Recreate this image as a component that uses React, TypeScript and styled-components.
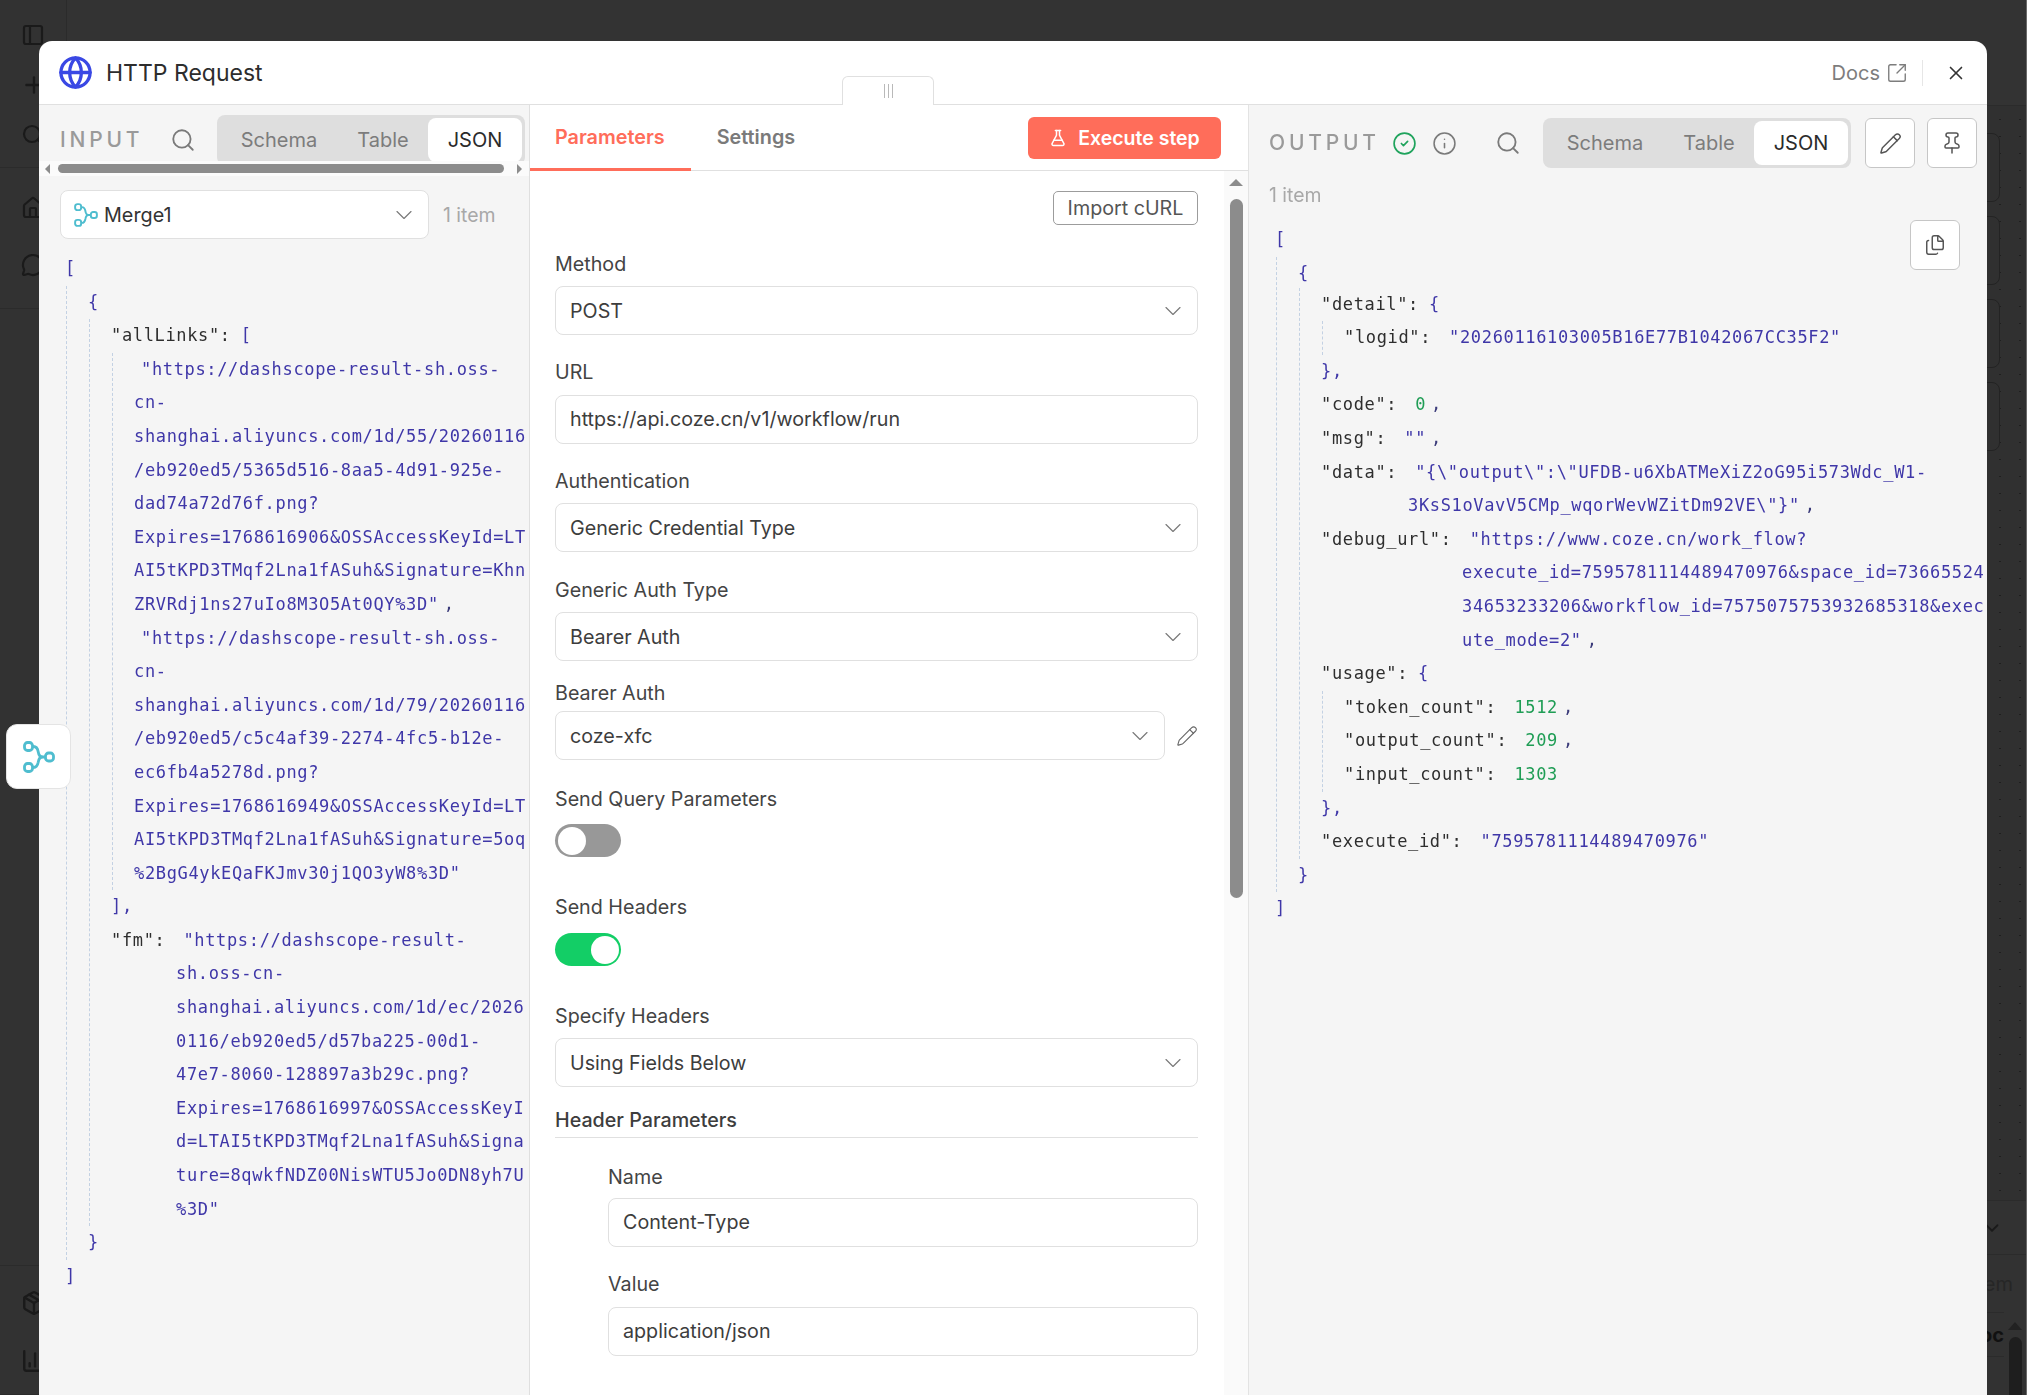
import styled, { createGlobalStyle } from 'styled-components';
import {
  BarChart3,
  ChevronDown,
  CircleCheck,
  Files,
  FlaskConical,
  Globe,
  Home,
  Info,
  MessageCircle,
  Package,
  PanelLeft,
  Pencil,
  Pin,
  Plus,
  Search,
  SquareArrowOutUpRight,
  X,
} from 'lucide-react';

const GlobalStyle = createGlobalStyle`
  html, body {
    margin: 0;
    padding: 0;
    height: 100%;
    overflow: hidden;
    background: #323232;
    font-family: 'Inter', 'Noto Sans', sans-serif;
  }
  * { box-sizing: border-box; }
`;

/* ---- page behind the dialog ---- */

const Backdrop = styled.div`
  display: grid;
  grid-template-columns: 67px 1fr;
  width: 2027px;
  height: 1395px;
  background: #323232;
  color: #1a1a1a;
  overflow: hidden;
  border-right: 1px solid #6a6a6a;
`;

const Sidebar = styled.aside`
  display: flex;
  flex-direction: column;
  border-right: 1px solid #2b2b2b;
`;

const SideGroup = styled.div<{ $h: number; $pt: number; $gap: number }>`
  display: flex;
  flex-direction: column;
  align-items: flex-start;
  gap: ${(p) => p.$gap}px;
  height: ${(p) => p.$h}px;
  padding: ${(p) => p.$pt}px 0 0 21px;
  border-bottom: 1px solid #2b2b2b;
  flex: none;
`;

const BackMain = styled.main`
  display: flex;
  flex-direction: column;
  background: #303030;
`;

const TopBar = styled.div`
  height: 106px;
  flex: none;
  background: #333;
  border-bottom: 1px solid #2b2b2b;
`;

const Canvas = styled.div`
  flex: 1;
  display: flex;
  flex-direction: column;
  align-items: flex-end;
  gap: 14px;
  padding: 27px 26px 0 0;
  background-color: #303030;
  background-image: radial-gradient(circle, #1f1f1f 0.8px, transparent 1px);
  background-size: 20px 17px;
  background-position: 1923px 5px;
`;

const GhostCard = styled.div`
  width: 200px;
  height: 69px;
  border: 1px solid #232323;
  border-radius: 8px;
`;

const LogPanel = styled.div`
  flex: none;
  height: 195px;
  background: #323232;
  border-top: 1px solid #2b2b2b;
  display: flex;
  flex-direction: column;
  position: relative;
`;

const LogToggleRow = styled.div`
  height: 54px;
  flex: none;
  display: flex;
  align-items: center;
  justify-content: flex-end;
  padding-right: 23px;
  border-bottom: 1px solid #2b2b2b;
`;

const LogLabelRow = styled.div`
  height: 57px;
  flex: none;
  display: flex;
  align-items: center;
  justify-content: flex-end;
  padding-right: 13px;
  font-size: 20px;
  color: #262626;
`;

const LogDocRow = styled.div`
  height: 45px;
  flex: none;
  margin-right: 22px;
  display: flex;
  align-items: center;
  justify-content: flex-end;
  border-top: 1px solid #2b2b2b;
  border-bottom: 1px solid #2b2b2b;
  font-size: 20px;
  font-weight: 700;
  color: #111;
`;

const LogScroll = styled.div`
  position: absolute;
  right: 4px;
  top: 121px;
  width: 14px;
  display: flex;
  flex-direction: column;
  align-items: center;
  gap: 7px;
`;

const LogArrow = styled.i`
  width: 0;
  height: 0;
  border-style: solid;
  border-width: 0 7px 8px 7px;
  border-color: transparent transparent #222 transparent;
`;

const LogThumb = styled.div`
  width: 13px;
  height: 70px;
  border-radius: 7px;
  background: #1e1e1e;
`;

/* ---- dialog ---- */

const Modal = styled.section`
  position: fixed;
  left: 39px;
  top: 41px;
  width: 1948px;
  height: 1354px;
  background: #fff;
  border-radius: 13px 13px 0 0;
  display: flex;
  flex-direction: column;
  overflow: hidden;
`;

const ModalHeader = styled.header`
  height: 64px;
  flex: none;
  display: flex;
  align-items: center;
  padding: 0 20px 0 19px;
  border-bottom: 1px solid #e0e0e0;
`;

const Title = styled.h1`
  margin: 0 0 0 13px;
  font-size: 23px;
  font-weight: 400;
  color: #2d2d2d;
  flex: 1;
`;

const DocsLink = styled.a`
  display: flex;
  align-items: center;
  gap: 6px;
  font-size: 20px;
  color: #7d7d7d;
`;

const HeaderDivider = styled.span`
  width: 1px;
  height: 26px;
  margin: 0 22px 0 14px;
  background: #e6e6e6;
`;

const HandleTab = styled.div`
  position: absolute;
  left: 803px;
  top: 35px;
  width: 92px;
  height: 29px;
  background: #fff;
  border: 1px solid #e0e0e0;
  border-bottom: none;
  border-radius: 6px 6px 0 0;
  display: flex;
  align-items: center;
  justify-content: center;
  gap: 3px;
  z-index: 2;
`;

const HandleBar = styled.i`
  width: 1px;
  height: 14px;
  background: #b9b9b9;
`;

const Panels = styled.div`
  flex: 1;
  display: grid;
  grid-template-columns: 491px 718px 1fr;
  min-height: 0;
`;

const DataPanel = styled.div`
  background: #f5f5f5;
  overflow: hidden;
  display: flex;
  flex-direction: column;
  min-width: 0;
`;

const InputPanel = styled(DataPanel)`
  border-right: 1px solid #dfdfdf;
`;

const OutputPanel = styled(DataPanel)`
  border-left: 1px solid #e3e3e3;
`;

const InputHead = styled.div`
  height: 56px;
  flex: none;
  display: flex;
  align-items: flex-start;
  padding: 10px 0 0 21px;
  overflow: hidden;
`;

const OutputHead = styled.div`
  height: 64px;
  flex: none;
  display: flex;
  align-items: flex-start;
  padding: 13px 0 0 20px;
`;

const PanelTitle = styled.span<{ $w: number }>`
  width: ${(p) => p.$w}px;
  height: 50px;
  flex: none;
  line-height: 50px;
  font-size: 21px;
  font-weight: 500;
  letter-spacing: 3.8px;
  color: #9a9a9a;
`;

const IconSlot = styled.span<{ $w: number }>`
  width: ${(p) => p.$w}px;
  height: 50px;
  flex: none;
  display: flex;
  align-items: center;
  color: ${(p) => p.color || '#7a7a7a'};
`;

const Tabs = styled.div`
  width: 308px;
  height: 50px;
  flex: none;
  padding: 3px;
  background: #dedede;
  border-radius: 8px;
  display: flex;
`;

const ModeTab = styled.span<{ $w: number; $active?: boolean }>`
  width: ${(p) => p.$w}px;
  flex: none;
  display: flex;
  align-items: center;
  justify-content: center;
  border-radius: 8px;
  font-size: 20px;
  font-weight: 400;
  color: ${(p) => (p.$active ? '#2b2b2b' : '#7c7c7c')};
  background: ${(p) => (p.$active ? '#fff' : 'transparent')};
`;

const HScroll = styled.div`
  height: 15px;
  flex: none;
  display: flex;
  align-items: center;
  background: #fbfbfb;
  padding: 0 6px;
`;

const ScrollArrow = styled.i<{ $dir: 'left' | 'right' }>`
  width: 0;
  height: 0;
  border-style: solid;
  border-width: 5px 0 5px 5px;
  border-color: transparent transparent transparent #8c8c8c;
  transform: ${(p) => (p.$dir === 'left' ? 'rotate(180deg)' : 'none')};
`;

const HThumb = styled.div`
  width: 446px;
  height: 9px;
  margin: 0 13px 0 8px;
  background: #8c8c8c;
  border-radius: 5px;
`;

const NodeRow = styled.div`
  display: flex;
  align-items: center;
  gap: 14px;
  padding: 14px 0 0 21px;
`;

const NodeSelect = styled.div`
  width: 369px;
  height: 49px;
  display: flex;
  align-items: center;
  gap: 6px;
  padding: 0 10px 0 13px;
  background: #fff;
  border: 1px solid #e0e0e0;
  border-radius: 8px;
  font-size: 19.8px;
  color: #333;
`;

const Grow = styled.span`
  flex: 1;
`;

const ItemCount = styled.span`
  font-size: 19.4px;
  color: #a8a8a8;
`;

const MergeTab = styled.div`
  position: fixed;
  left: 6px;
  top: 724px;
  width: 65px;
  height: 65px;
  background: #fff;
  border: 1px solid #e4e4e4;
  border-radius: 11px;
  display: flex;
  align-items: center;
  justify-content: center;
  z-index: 3;
`;

/* ---- json tree ---- */

const JsonTree = styled.div<{ $pl: number; $pt: number }>`
  padding: ${(p) => p.$pt}px 0 0 ${(p) => p.$pl}px;
  font-family: 'DejaVu Sans Mono', 'Liberation Mono', monospace;
  font-size: 17px;
  letter-spacing: 0.65px;
  color: #3f37a8;
  position: relative;
`;

const Guide = styled.div<{ $lift?: number }>`
  border-left: 1px dashed #c3d1e3;
  padding-left: 22px;
  margin-top: ${(p) => -(p.$lift || 0)}px;
`;

const Row = styled.div<{ $hang?: number }>`
  height: 33.6px;
  line-height: 33.6px;
  white-space: pre;
  padding-left: ${(p) => p.$hang || 0}px;
  margin-left: -1px;
`;

const Key = styled.span<{ $gap?: number }>`
  color: #2e2e2e;
  margin-right: ${(p) => p.$gap ?? 18}px;
`;

const Num = styled.span`
  color: #1f9d55;
`;

const Comma = styled.span`
  color: #3b3b7a;
  margin-left: 5px;
`;

const CopyButton = styled.button`
  position: absolute;
  right: 27px;
  top: 8px;
  width: 50px;
  height: 50px;
  display: flex;
  align-items: center;
  justify-content: center;
  background: #fff;
  border: 1px solid #c6c6c6;
  border-radius: 6px;
  color: #555;
`;

const IconButton = styled.button<{ $ml: number }>`
  width: 50px;
  height: 50px;
  flex: none;
  margin-left: ${(p) => p.$ml}px;
  display: flex;
  align-items: center;
  justify-content: center;
  background: #fff;
  border: 1px solid #c6c6c6;
  border-radius: 6px;
  color: #555;
`;

const OutputCount = styled.div`
  padding: 13px 0 0 20px;
  font-size: 19.4px;
  height: 43px;
  color: #a8a8a8;
  line-height: 27px;
`;

/* ---- parameters ---- */

const ParamPanel = styled.div`
  display: flex;
  flex-direction: column;
  min-width: 0;
  background: #fff;
`;

const ParamTabs = styled.div`
  height: 66px;
  flex: none;
  display: flex;
  align-items: stretch;
  border-bottom: 1px solid #e0e0e0;
  padding-right: 27px;
`;

const ParamTab = styled.span<{ $active?: boolean }>`
  display: flex;
  align-items: center;
  padding: 0 26px 0 ${(p) => (p.$active ? 25 : 26)}px;
  margin-bottom: -1px;
  font-size: 19.8px;
  font-weight: 600;
  color: ${(p) => (p.$active ? '#ff6d5a' : '#7a7a7a')};
  border-bottom: 3px solid ${(p) => (p.$active ? '#ff6d5a' : 'transparent')};
`;

const ExecuteButton = styled.button`
  align-self: flex-start;
  margin: 12px 0 0 auto;
  width: 193px;
  height: 42px;
  display: flex;
  align-items: center;
  justify-content: center;
  gap: 11px;
  border: none;
  border-radius: 6px;
  background: #ff6d5a;
  color: #fff;
  font-family: inherit;
  font-size: 19.5px;
  font-weight: 600;
`;

const ParamBody = styled.div`
  flex: 1;
  display: flex;
  min-height: 0;
  overflow: hidden;
`;

const Form = styled.div`
  flex: 1;
  min-width: 0;
  padding: 20px 26px 0 25px;
`;

const VScroll = styled.div`
  width: 24px;
  flex: none;
  display: flex;
  flex-direction: column;
  align-items: center;
  padding-top: 8px;
  background: #fafafa;
`;

const VArrow = styled.i`
  width: 0;
  height: 0;
  border-style: solid;
  border-width: 0 7px 7px 7px;
  border-color: transparent transparent #8c8c8c transparent;
`;

const VThumb = styled.div`
  width: 13px;
  height: 699px;
  margin-top: 13px;
  background: #8c8c8c;
  border-radius: 7px;
`;

const ImportRow = styled.div`
  display: flex;
  justify-content: flex-end;
`;

const ImportButton = styled.button`
  width: 145px;
  height: 34px;
  background: #fff;
  border: 1px solid #9c9c9c;
  border-radius: 5px;
  font-family: inherit;
  font-size: 19.7px;
  color: #555;
  padding: 0;
`;

const Field = styled.div<{ $top: number; $indent?: boolean }>`
  margin-top: ${(p) => p.$top}px;
  padding-left: ${(p) => (p.$indent ? 53 : 0)}px;
`;

const Label = styled.div<{ $mb?: number }>`
  height: 24px;
  line-height: 24px;
  margin-bottom: ${(p) => p.$mb ?? 10.5}px;
  font-size: 19.7px;
  color: #444;
`;

const Control = styled.div`
  height: 49px;
  display: flex;
  align-items: center;
  padding: 0 10px 0 14px;
  background: #fff;
  border: 1px solid #e0e0e0;
  border-radius: 8px;
  font-size: 19.7px;
  color: #3d3d3d;
`;

const ControlText = styled.span`
  flex: 1;
`;

const CredentialRow = styled.div`
  display: flex;
  align-items: center;
  gap: 11px;
  & > ${Control} {
    flex: 1;
  }
`;

const Toggle = styled.div<{ $on?: boolean }>`
  width: 66px;
  height: 33px;
  padding: 2.5px;
  border-radius: 17px;
  background: ${(p) => (p.$on ? '#13ce66' : '#989898')};
  display: flex;
  justify-content: ${(p) => (p.$on ? 'flex-end' : 'flex-start')};
  &::after {
    content: '';
    width: 28px;
    height: 28px;
    border-radius: 50%;
    background: #fff;
  }
`;

const SectionTitle = styled.div`
  height: 30px;
  line-height: 24px;
  font-size: 19.7px;
  font-weight: 500;
  color: #3d3d3d;
  border-bottom: 1px solid #e0e0e0;
`;

const Chevron = () => <ChevronDown size={28} strokeWidth={1} color="#7a7a7a" />;

const MergeIcon = ({ size, stroke }: { size: number; stroke: number }) => (
  <svg width={size} height={size} viewBox="0 0 32 32" fill="none" stroke="#4fbdcf" strokeWidth={stroke}>
    <rect x="1.500" y="1.500" width="8" height="8" rx="3" />
    <rect x="1.500" y="22.500" width="8" height="8" rx="3" />
    <rect x="22.500" y="12" width="8" height="8" rx="3" />
    <path d="M9.500 5.500h1c3.500 0 4.200 2.500 4.700 5.200.4 2.600 1.300 5.300 4.300 5.300h3" />
    <path d="M9.500 26.500h1c3.500 0 4.200-2.500 4.700-5.200.4-2.600 1.300-5.300 4.300-5.300" />
  </svg>
);

export default function App() {
  return (
    <>
      <GlobalStyle />
      <Backdrop>
        <Sidebar>
          <SideGroup $h={168} $pt={23} $gap={25}>
            <PanelLeft size={24} strokeWidth={2.2} />
            <Plus size={26} strokeWidth={2.2} />
            <Search size={24} strokeWidth={2.2} />
          </SideGroup>
          <SideGroup $h={141} $pt={28} $gap={33}>
            <Home size={24} strokeWidth={2.2} />
            <MessageCircle size={24} strokeWidth={2.2} />
          </SideGroup>
          <SideGroup $h={957} $pt={0} $gap={0} />
          <SideGroup $h={129} $pt={24} $gap={32}>
            <Package size={26} strokeWidth={2.2} />
            <BarChart3 size={26} strokeWidth={2.2} />
          </SideGroup>
        </Sidebar>
        <BackMain>
          <TopBar />
          <Canvas>
            <GhostCard />
            <GhostCard />
            <GhostCard />
            <GhostCard />
          </Canvas>
          <LogPanel>
            <LogToggleRow>
              <ChevronDown size={22} strokeWidth={2} />
            </LogToggleRow>
            <LogLabelRow>Item</LogLabelRow>
            <LogDocRow>Doc</LogDocRow>
            <LogScroll>
              <LogArrow />
              <LogThumb />
            </LogScroll>
          </LogPanel>
        </BackMain>
      </Backdrop>

      <MergeTab>
        <MergeIcon size={32} stroke={2.8} />
      </MergeTab>

      <Modal>
        <ModalHeader>
          <Globe size={35} strokeWidth={2.3} color="#3a48e4" />
          <Title>HTTP Request</Title>
          <DocsLink>
            Docs
            <SquareArrowOutUpRight size={22} strokeWidth={1.5} />
          </DocsLink>
          <HeaderDivider />
          <X size={22} strokeWidth={1.8} color="#333" />
        </ModalHeader>
        <HandleTab>
          <HandleBar />
          <HandleBar />
          <HandleBar />
        </HandleTab>

        <Panels>
          <InputPanel>
            <InputHead>
              <PanelTitle $w={110}>INPUT</PanelTitle>
              <IconSlot $w={47}>
                <Search size={26} strokeWidth={1.7} />
              </IconSlot>
              <Tabs>
                <ModeTab $w={118}>Schema</ModeTab>
                <ModeTab $w={90}>Table</ModeTab>
                <ModeTab $w={94} $active>
                  JSON
                </ModeTab>
              </Tabs>
            </InputHead>
            <HScroll>
              <ScrollArrow $dir="left" />
              <HThumb />
              <ScrollArrow $dir="right" />
            </HScroll>
            <NodeRow>
              <NodeSelect>
                <MergeIcon size={24} stroke={2.6} />
                Merge1
                <Grow />
                <Chevron />
              </NodeSelect>
              <ItemCount>1 item</ItemCount>
            </NodeRow>
            <JsonTree $pl={27} $pt={13}>
              <Row>[</Row>
              <Guide>
                <Row>{'{'}</Row>
                <Guide>
                  <Row>
                    <Key $gap={10}>"allLinks":</Key>[
                  </Row>
                  <Guide>
                    <Row $hang={7}>"https://dashscope-result-sh.oss-</Row>
                    <Row>cn-</Row>
                    <Row>shanghai.aliyuncs.com/1d/55/20260116</Row>
                    <Row>/eb920ed5/5365d516-8aa5-4d91-925e-</Row>
                    <Row>dad74a72d76f.png?</Row>
                    <Row>Expires=1768616906&amp;OSSAccessKeyId=LT</Row>
                    <Row>AI5tKPD3TMqf2Lna1fASuh&amp;Signature=Khn</Row>
                    <Row>
                      ZRVRdj1ns27uIo8M3O5At0QY%3D"<Comma>,</Comma>
                    </Row>
                    <Row $hang={7}>"https://dashscope-result-sh.oss-</Row>
                    <Row>cn-</Row>
                    <Row>shanghai.aliyuncs.com/1d/79/20260116</Row>
                    <Row>/eb920ed5/c5c4af39-2274-4fc5-b12e-</Row>
                    <Row>ec6fb4a5278d.png?</Row>
                    <Row>Expires=1768616949&amp;OSSAccessKeyId=LT</Row>
                    <Row>AI5tKPD3TMqf2Lna1fASuh&amp;Signature=5oq</Row>
                    <Row>%2BgG4ykEQaFKJmv30j1QO3yW8%3D"</Row>
                  </Guide>
                  <Row>],</Row>
                  <Row>
                    <Key>"fm":</Key>"https://dashscope-result-
                  </Row>
                  <Row $hang={65}>sh.oss-cn-</Row>
                  <Row $hang={65}>shanghai.aliyuncs.com/1d/ec/2026</Row>
                  <Row $hang={65}>0116/eb920ed5/d57ba225-00d1-</Row>
                  <Row $hang={65}>47e7-8060-128897a3b29c.png?</Row>
                  <Row $hang={65}>Expires=1768616997&amp;OSSAccessKeyI</Row>
                  <Row $hang={65}>d=LTAI5tKPD3TMqf2Lna1fASuh&amp;Signa</Row>
                  <Row $hang={65}>ture=8qwkfNDZ00NisWTU5Jo0DN8yh7U</Row>
                  <Row $hang={65}>%3D"</Row>
                </Guide>
                <Row>{'}'}</Row>
              </Guide>
              <Row>]</Row>
            </JsonTree>
          </InputPanel>

          <ParamPanel>
            <ParamTabs>
              <ParamTab $active>Parameters</ParamTab>
              <ParamTab>Settings</ParamTab>
              <ExecuteButton>
                <FlaskConical size={18} strokeWidth={2} />
                Execute step
              </ExecuteButton>
            </ParamTabs>
            <ParamBody>
              <Form>
                <ImportRow>
                  <ImportButton>Import cURL</ImportButton>
                </ImportRow>
                <Field $top={26.5}>
                  <Label>Method</Label>
                  <Control>
                    <ControlText>POST</ControlText>
                    <Chevron />
                  </Control>
                </Field>
                <Field $top={25.2}>
                  <Label>URL</Label>
                  <Control>https://api.coze.cn/v1/workflow/run</Control>
                </Field>
                <Field $top={25.2}>
                  <Label>Authentication</Label>
                  <Control>
                    <ControlText>Generic Credential Type</ControlText>
                    <Chevron />
                  </Control>
                </Field>
                <Field $top={25.2}>
                  <Label>Generic Auth Type</Label>
                  <Control>
                    <ControlText>Bearer Auth</ControlText>
                    <Chevron />
                  </Control>
                </Field>
                <Field $top={19.6}>
                  <Label $mb={6.4}>Bearer Auth</Label>
                  <CredentialRow>
                    <Control>
                      <ControlText>coze-xfc</ControlText>
                      <Chevron />
                    </Control>
                    <Pencil size={22} strokeWidth={1.2} color="#666" />
                  </CredentialRow>
                </Field>
                <Field $top={27}>
                  <Label $mb={13}>Send Query Parameters</Label>
                  <Toggle />
                </Field>
                <Field $top={38}>
                  <Label $mb={14}>Send Headers</Label>
                  <Toggle $on />
                </Field>
                <Field $top={37.5}>
                  <Label>Specify Headers</Label>
                  <Control>
                    <ControlText>Using Fields Below</ControlText>
                    <Chevron />
                  </Control>
                </Field>
                <Field $top={20.7}>
                  <SectionTitle>Header Parameters</SectionTitle>
                </Field>
                <Field $top={27} $indent>
                  <Label $mb={9}>Name</Label>
                  <Control>Content-Type</Control>
                </Field>
                <Field $top={25.7} $indent>
                  <Label $mb={10.3}>Value</Label>
                  <Control>application/json</Control>
                </Field>
              </Form>
              <VScroll>
                <VArrow />
                <VThumb />
              </VScroll>
            </ParamBody>
          </ParamPanel>

          <OutputPanel>
            <OutputHead>
              <PanelTitle $w={123}>OUTPUT</PanelTitle>
              <IconSlot $w={40} color="#1fa35c">
                <CircleCheck size={25} strokeWidth={1.6} />
              </IconSlot>
              <IconSlot $w={63}>
                <Info size={25} strokeWidth={1.5} />
              </IconSlot>
              <IconSlot $w={48}>
                <Search size={26} strokeWidth={1.7} />
              </IconSlot>
              <Tabs>
                <ModeTab $w={118}>Schema</ModeTab>
                <ModeTab $w={90}>Table</ModeTab>
                <ModeTab $w={94} $active>
                  JSON
                </ModeTab>
              </Tabs>
              <IconButton $ml={14}>
                <Pencil size={23} strokeWidth={1.5} />
              </IconButton>
              <IconButton $ml={12}>
                <Pin size={24} strokeWidth={1.5} />
              </IconButton>
            </OutputHead>
            <OutputCount>1 item</OutputCount>
            <JsonTree $pl={27} $pt={11}>
              <CopyButton>
                <Files size={22} strokeWidth={1.6} />
              </CopyButton>
              <Row>[</Row>
              <Guide>
                <Row>{'{'}</Row>
                <Guide $lift={2.6}>
                  <Row>
                    <Key $gap={10}>"detail":</Key>
                    {'{'}
                  </Row>
                  <Guide>
                    <Row>
                      <Key>"logid":</Key>"20260116103005B16E77B1042067CC35F2"
                    </Row>
                  </Guide>
                  <Row>{'},'}</Row>
                  <Row>
                    <Key>"code":</Key>
                    <Num>0</Num>
                    <Comma>,</Comma>
                  </Row>
                  <Row>
                    <Key>"msg":</Key>""<Comma>,</Comma>
                  </Row>
                  <Row>
                    <Key>"data":</Key>
                    {'"{\\"output\\":\\"UFDB-u6XbATMeXiZ2oG95i573Wdc_W1-'}
                  </Row>
                  <Row $hang={87}>
                    {'3KsS1oVavV5CMp_wqorWevWZitDm92VE\\"}"'}
                    <Comma>,</Comma>
                  </Row>
                  <Row>
                    <Key>"debug_url":</Key>"https://www.coze.cn/work_flow?
                  </Row>
                  <Row $hang={141}>execute_id=7595781114489470976&amp;space_id=73665524</Row>
                  <Row $hang={141}>34653233206&amp;workflow_id=7575075753932685318&amp;exec</Row>
                  <Row $hang={141}>
                    ute_mode=2"<Comma>,</Comma>
                  </Row>
                  <Row>
                    <Key $gap={10}>"usage":</Key>
                    {'{'}
                  </Row>
                  <Guide>
                    <Row>
                      <Key>"token_count":</Key>
                      <Num>1512</Num>
                      <Comma>,</Comma>
                    </Row>
                    <Row>
                      <Key>"output_count":</Key>
                      <Num>209</Num>
                      <Comma>,</Comma>
                    </Row>
                    <Row>
                      <Key>"input_count":</Key>
                      <Num>1303</Num>
                    </Row>
                  </Guide>
                  <Row>{'},'}</Row>
                  <Row>
                    <Key>"execute_id":</Key>"7595781114489470976"
                  </Row>
                </Guide>
                <Row>{'}'}</Row>
              </Guide>
              <Row>]</Row>
            </JsonTree>
          </OutputPanel>
        </Panels>
      </Modal>
    </>
  );
}
